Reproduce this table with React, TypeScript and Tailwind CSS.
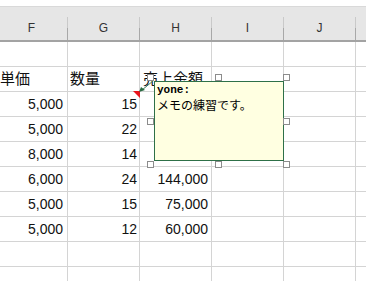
import React from "react";

const COLS = ["F", "G", "H", "I", "J", "K"];

// F, G, H values per sheet row; everything past H is empty
const rows: { text?: boolean; cells: string[] }[] = [
  { cells: ["", "", ""] },
  { text: true, cells: ["単価", "数量", "売上金額"] },
  { cells: ["5,000", "15", "75,000"] },
  { cells: ["5,000", "22", "110,000"] },
  { cells: ["8,000", "14", "112,000"] },
  { cells: ["6,000", "24", "144,000"] },
  { cells: ["5,000", "15", "75,000"] },
  { cells: ["5,000", "12", "60,000"] },
  { cells: ["", "", ""] },
  { cells: ["", "", ""] },
];

const numPad = ["pr-[4px]", "pr-[2px]", "pr-[3px]"];
const textPad = ["pl-[4px]", "pl-[2px]", "pl-[3px]"];

// resize grip around the selected comment
const handles = [
  [147, 74], [215, 74], [283, 74],
  [147, 118], [283, 118],
  [147, 161], [215, 161], [283, 161],
];

export default function App() {
  return (
    <div
      className="relative h-[281px] w-[366px] overflow-hidden bg-white text-[14px] text-[#111]"
      style={{ fontFamily: '"Liberation Sans", "Noto Sans CJK JP", sans-serif' }}
    >
      <div className="h-[6px] bg-white" />

      {/* column header bar */}
      <div className="-ml-[4px] flex h-[36px] w-[432px] border-t border-b-2 border-t-[#d9d9d9] border-b-[#a3a3a3] bg-[#e6e6e6]">
        {COLS.map((c) => (
          <div key={c} className="flex w-[72px] shrink-0">
            <div className="flex flex-1 items-end justify-center pb-[5px] text-[12px] leading-[14px] text-[#333]">
              {c === "K" ? "" : c}
            </div>
            <div className="flex w-px flex-col self-end">
              <div className="h-[11px] bg-[#c9c9c9]" />
              <div className="h-[12px] bg-[#a8a8a8]" />
            </div>
          </div>
        ))}
      </div>

      {/* grid rows */}
      <div className="-ml-[4px] w-[432px]">
        {rows.map((row, r) => (
          <div key={r} className="flex">
            {COLS.map((c, i) => {
              const v = row.cells[i] ?? "";
              return (
                <div
                  key={c}
                  className={`relative flex h-[25px] w-[72px] shrink-0 items-end border-r border-b border-[#d4d4d4] pb-[4px] leading-[16px] ${
                    row.text ? "justify-start" : "justify-end"
                  } ${i < 3 ? (row.text ? textPad[i] : numPad[i]) : ""}`}
                >
                  {row.text ? <span className="text-[15px]">{v}</span> : v}
                  {r === 2 && i === 1 && (
                    <svg className="absolute -top-px -right-px" width="7" height="7" viewBox="0 0 7 7">
                      <polygon points="0,0 7,0 7,7" fill="#e8141b" />
                    </svg>
                  )}
                </div>
              );
            })}
          </div>
        ))}
      </div>

      {/* comment callout */}
      <svg className="absolute left-[136px] top-[78px]" width="22" height="18" viewBox="0 0 22 18">
        <line x1="6" y1="12" x2="17" y2="3" stroke="#3f7d57" strokeWidth="1" />
        <polygon points="3,14 5,9 9,12" fill="#2b6b43" />
      </svg>

      <div className="absolute left-[154px] top-[81px] h-[80px] w-[130px] border border-[#2e7048] bg-[#ffffe1] pl-[2px] pt-[1px] text-black">
        <div
          className="text-[11px] font-bold leading-[14px]"
          style={{ fontFamily: '"Liberation Mono", "Noto Sans CJK JP", monospace' }}
        >
          yone:
        </div>
        <div
          className="text-[12px] leading-[16px]"
          style={{ fontFamily: '"Noto Sans CJK JP", sans-serif' }}
        >
          メモの練習です。
        </div>
      </div>

      {handles.map(([x, y]) => (
        <div
          key={`${x}-${y}`}
          className="absolute h-[7px] w-[7px] border border-[#8c8c8c] bg-white"
          style={{ left: x, top: y }}
        />
      ))}
    </div>
  );
}
